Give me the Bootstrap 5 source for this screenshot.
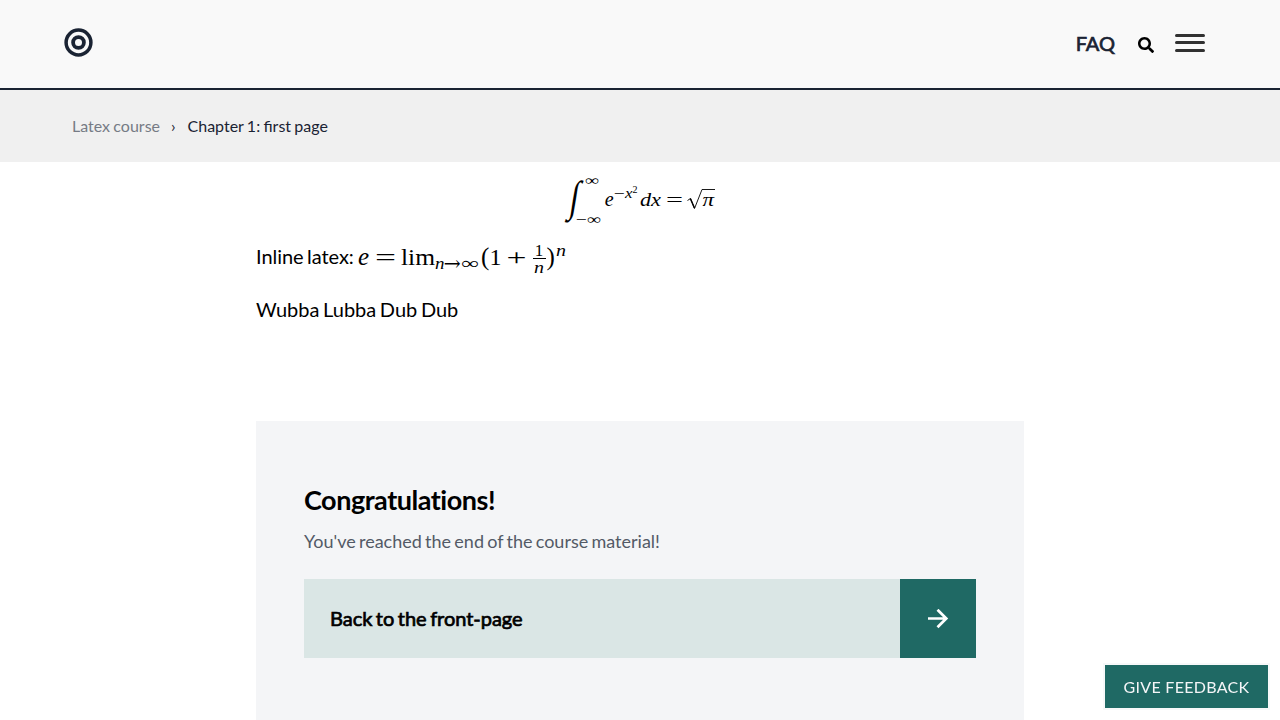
<!DOCTYPE html>
<html lang="en">
<head>
<meta charset="utf-8">
<meta name="viewport" content="width=device-width, initial-scale=1">
<title>Chapter 1: first page</title>
<link href="https://cdn.jsdelivr.net/npm/bootstrap@5.3.0/dist/css/bootstrap.min.css" rel="stylesheet">
<style>
body { font-family: Lato, sans-serif; color: #000; font-size: 20px; line-height: 32px; word-spacing: -1.5px; }
a { text-decoration: none; }
.site-header { height: 90px; background: #f9f9f9; border-bottom: 2px solid #1a2333; padding: 0 75px 0 64px; }
.home-link { margin-top: 28px; height: 29px; line-height: 0; }
.faq-link { color: #1a2333; -webkit-text-stroke: .7px #1a2333; line-height: 24px; margin-top: 31px; }
.search-icon { margin: 37px 21px 0 23px; }
.bars { padding-top: 34px; }
.bars span { display: block; width: 30px; height: 3px; border-radius: 2px; background: #313131; }
.bars span + span { margin-top: 4px; }
.bars span + span + span { margin-top: 5px; }
.crumbs { height: 72px; background: #f0f0f0; padding-left: 72px; font-size: 16px; line-height: 24px; color: #1a2333; word-spacing: -.8px; }
.crumbs a { color: #767b85; width: 87px; white-space: nowrap; }
.crumb-sep { margin: 0 12px; }
.content-col { width: 768px; }
.formula { font-family: "Liberation Serif", serif; display: block; word-spacing: 0; }
.formula .it { font-style: italic; }
.display-math { padding-top: 10px; }
.inline-math { height: 40px; margin-top: 10px; line-height: 36px; }
.inline-math > span { width: 100px; letter-spacing: -.06px; }
.wubba { margin-top: 15px; }
.end-panel { background: #f4f5f7; padding: 64px 48px 0; margin-top: 96px; height: 299px; }
.end-panel h1 { font: 700 27px/30px Lato, sans-serif; margin: 0 0 12px; letter-spacing: -.47px; font-variant-ligatures: none; }
.end-panel p { font-size: 18px; line-height: 28px; color: #535a66; margin-bottom: 24px; word-spacing: -1.35px; }
.next-box { height: 79px; background: #dae6e5; color: #000; }
.next-label { padding: 0 0 1px 26px; -webkit-text-stroke: .7px #000; letter-spacing: -.04px; }
.next-arrow { width: 76px; background: #1f6964; }
.feedback { right: 12px; bottom: 12px; width: 163px; height: 43px; background: #1f6964; color: #f4f5f7; font-size: 16px; border: 0; border-radius: 0; box-shadow: 0 0 0 2px #f7f8f9; letter-spacing: .3px; }
</style>
</head>
<body>
<header class="site-header d-flex justify-content-between">
  <a href="#" class="home-link" aria-label="Home">
    <svg width="29" height="29" viewBox="0 0 29 29" fill="none" stroke="#1a2333"><circle cx="14.5" cy="14.5" r="12.4" stroke-width="3.5"/><circle cx="14.5" cy="14.5" r="5.4" stroke-width="3.8"/></svg>
  </a>
  <nav class="d-flex align-items-start">
    <a class="faq-link" href="#">FAQ</a>
    <svg class="search-icon" width="16" height="16" viewBox="0 0 512 512"><path d="M505 442.700 405.300 343c-4.500-4.500-10.600-7-17-7H372c27.600-35.300 44-79.700 44-128C416 93.100 322.900 0 208 0S0 93.100 0 208s93.100 208 208 208c48.300 0 92.700-16.400 128-44v16.300c0 6.400 2.500 12.500 7 17l99.700 99.700c9.400 9.400 24.600 9.400 33.900 0l28.300-28.300c9.400-9.400 9.400-24.600.1-34zM208 336c-70.700 0-128-57.200-128-128 0-70.700 57.200-128 128-128 70.700 0 128 57.200 128 128 0 70.700-57.200 128-128 128z"/></svg>
    <div class="bars"><span></span><span></span><span></span></div>
  </nav>
</header>
<nav class="crumbs d-flex align-items-center">
  <a href="#">Latex course</a><span class="crumb-sep">›</span><span>Chapter 1: first page</span>
</nav>
<main class="content-col mx-auto">
  <div class="display-math d-flex justify-content-center">
    <svg class="formula" width="160" height="56" viewBox="0 0 160 56">
      <text transform="translate(8.300 39) skewX(-9) scale(1.080 1.440)" font-size="30" class="it">∫</text>
      <text x="25" y="13" font-size="14" textLength="14" lengthAdjust="spacingAndGlyphs">∞</text>
      <text x="16" y="52" font-size="14" textLength="25" lengthAdjust="spacingAndGlyphs">−∞</text>
      <text x="44.800" y="33.500" font-size="20" class="it">e</text>
      <text x="54" y="26" font-size="14" textLength="11" lengthAdjust="spacingAndGlyphs">−</text>
      <text x="65" y="25.500" font-size="14" class="it" textLength="7.500" lengthAdjust="spacingAndGlyphs">x</text>
      <text x="72.500" y="20.500" font-size="10">2</text>
      <text x="80" y="33.500" font-size="19" class="it" textLength="21" lengthAdjust="spacingAndGlyphs">dx</text>
      <text x="106" y="34" font-size="19" textLength="17" lengthAdjust="spacingAndGlyphs">=</text>
      <path d="M127.500 28.500 130.500 26.500 134.500 36.500 142 17.500H155" fill="none" stroke="#000" stroke-width=".9"/><path d="M130.300 26.500 134.500 36" stroke="#000" stroke-width="1.500"/>
      <text x="142.500" y="33.500" font-size="19" class="it" textLength="11.500" lengthAdjust="spacingAndGlyphs">π</text>
    </svg>
  </div>
  <div class="inline-math d-flex">
    <span>Inline latex:</span>
    <svg class="formula" width="216" height="40" viewBox="0 0 216 40">
      <text x="2" y="27" font-size="25" class="it">e</text>
      <text x="19" y="27" font-size="24" textLength="21" lengthAdjust="spacingAndGlyphs">=</text>
      <text x="45" y="26.500" font-size="24" textLength="34" lengthAdjust="spacingAndGlyphs">lim</text>
      <text x="79" y="31" font-size="17" class="it" textLength="9.500" lengthAdjust="spacingAndGlyphs">n</text>
      <text x="87.500" y="31" font-size="19" font-family="DejaVu Math TeX Gyre, Liberation Serif" textLength="18" lengthAdjust="spacingAndGlyphs">→</text>
      <text x="105.500" y="31" font-size="17" textLength="18" lengthAdjust="spacingAndGlyphs">∞</text>
      <text x="125" y="27" font-size="25">(</text>
      <text x="133.500" y="26.500" font-size="24">1</text>
      <text x="150.500" y="27" font-size="24" textLength="20" lengthAdjust="spacingAndGlyphs">+</text>
      <text x="178.800" y="17.500" font-size="17">1</text>
      <path d="M177 20.500H190" stroke="#000"/>
      <text x="178" y="35" font-size="17" class="it" textLength="10" lengthAdjust="spacingAndGlyphs">n</text>
      <text x="190.500" y="27" font-size="25">)</text>
      <text x="200" y="17.500" font-size="17" class="it" textLength="10" lengthAdjust="spacingAndGlyphs">n</text>
    </svg>
  </div>
  <div class="wubba">Wubba Lubba Dub Dub</div>
  <section class="end-panel">
    <h1>Congratulations!</h1>
    <p>You've reached the end of the course material!</p>
    <a href="#" class="next-box d-flex align-items-stretch">
      <span class="next-label flex-grow-1 d-flex align-items-center">Back to the front-page</span>
      <span class="next-arrow d-flex align-items-center justify-content-center">
        <svg width="22" height="20" viewBox="0 0 22 20" fill="none" stroke="#fff" stroke-width="2.700"><path d="M1 9.500H19M10.500 .7 19.300 9.500 10.500 18.300"/></svg>
      </span>
    </a>
  </section>
</main>
<button class="feedback position-fixed p-0">GIVE FEEDBACK</button>
<script src="https://cdn.jsdelivr.net/npm/bootstrap@5.3.0/dist/js/bootstrap.bundle.min.js"></script>
</body>
</html>
